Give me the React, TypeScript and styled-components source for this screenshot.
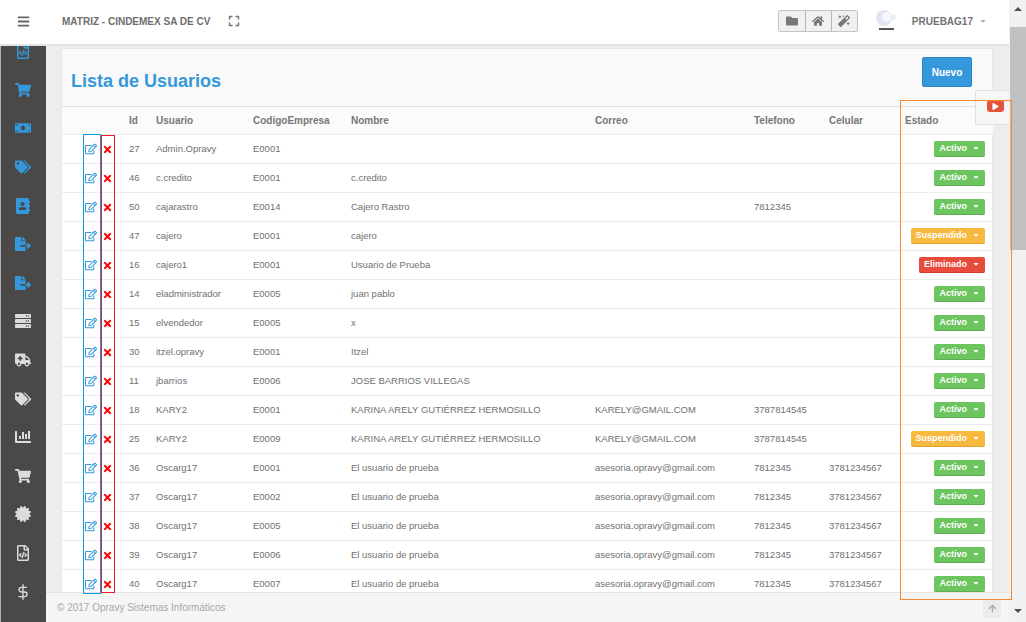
import React from "react";
import styled, { createGlobalStyle } from "styled-components";
import {
  FaBars, FaExpand, FaFolder, FaHome, FaMagic, FaCaretDown, FaRegEdit, FaTimes, FaShoppingCart, FaMoneyBill,
  FaTags, FaAddressBook, FaFileExport, FaServer, FaAmbulance, FaChartBar, FaCertificate, FaRegFileCode,
  FaRegFile, FaArrowUp, FaPlay, FaPortrait,
} from "react-icons/fa";
import { FiDollarSign } from "react-icons/fi";

const Global = createGlobalStyle`
  html, body { margin: 0; padding: 0; overflow: hidden; background: #ededed; }
  body { font-family: "Liberation Sans", Arial, sans-serif; }
  * { box-sizing: border-box; }
`;

const Page = styled.div`
  position: relative; display: flex; width: 1026px; height: 622px; overflow: hidden; background: #ededed;
`;
const Shell = styled.div`
  flex: 1; min-width: 0; display: flex; flex-direction: column;
`;
const TopBar = styled.header`
  position: relative; z-index: 2; flex: 0 0 46px; display: flex; align-items: center; background: #fff;
  border-bottom: 2px solid #e3e3e3; padding: 0 22px 2px 17px; color: #6f6f6f;
`;
const Burger = styled(FaBars)`font-size: 13px; color: #666; width: 13px;`;
const Company = styled.span`
  margin-left: 32px; font-size: 10px; font-weight: 700; color: #6e6e6e;
`;
const Fullscreen = styled(FaExpand)`margin-left: 18px; font-size: 12px; color: #777;`;
const Spacer = styled.div`flex: 1;`;
const Group = styled.div`
  display: flex; height: 22px; border: 1px solid #c4c4c4; border-radius: 2px; background: #f0f0f0;
`;
const GroupButton = styled.div`
  width: 26px; display: flex; align-items: center; justify-content: center; font-size: 12px; color: #777;
  & + & { border-left: 1px solid #b5b5b5; }
`;
const Logo = styled.svg`margin-left: 16px; width: 24px; height: 24px;`;
const UserName = styled.span`margin-left: 14px; font-size: 10px; font-weight: 700; color: #737373;`;
const UserCaret = styled(FaCaretDown)`margin-left: 6px; font-size: 8px; color: #aaa;`;

const Body = styled.div`flex: 1; min-height: 0; display: flex;`;
const Sidebar = styled.nav`
  flex: 0 0 46px; overflow: hidden; background: #4a4947; border-left: 1px solid #aab2bf;
`;
const SideList = styled.div`
  margin-top: -14px; display: flex; flex-direction: column; align-items: center; padding-right: 1px;
`;
const SideItem = styled.div<{ $blue?: boolean }>`
  height: 38.6px; flex: none; width: 100%; display: flex; align-items: center; justify-content: center;
  font-size: 16px; color: ${(p) => (p.$blue ? "#3498db" : "#dcdcdc")};
`;
const Main = styled.main`flex: 1; min-width: 0; display: flex; flex-direction: column;`;
const Scroller = styled.div`flex: 1; min-height: 0; overflow: hidden; padding: 2px 16px 0 15px;`;
const Card = styled.section`background: #fff; border: 1px solid #e6e6e6; border-bottom: 0;`;
const CardHead = styled.div`
  height: 58px; display: flex; align-items: flex-start; justify-content: space-between;
  background: #f9f9f9; border-bottom: 1px solid #e3e3e3; padding: 8px 20px 0 9px;
`;
const Title = styled.h1`
  margin: 13px 0 0; font-size: 18px; line-height: 22px; font-weight: 700; color: #3498db;
`;
const NewButton = styled.div`
  width: 50px; height: 30px; display: flex; align-items: center; justify-content: center;
  background: #3498db; border: 1px solid #2a85c4; border-radius: 2px;
  font-size: 10px; font-weight: 700; color: #fff;
`;
const Table = styled.table`
  width: 931px; border-collapse: collapse; table-layout: fixed; font-size: 9.5px; color: #707070;
`;
const Th = styled.th<{ $w: number }>`
  width: ${(p) => p.$w}px; height: 27px; padding: 0 8px; text-align: left; font-weight: 700; color: #777;
  background: #fbfbfb; border-bottom: 1px solid #ececec; font-size: 10px; white-space: nowrap;
`;
const Td = styled.td`
  height: 29px; padding: 0 8px; border-bottom: 1px solid #ececec; white-space: nowrap; overflow: visible;
`;
const ActionCell = styled.td`
  height: 29px; padding: 0 0 0 23px; border-bottom: 1px solid #ececec; font-size: 11px; line-height: 0;
`;
const EditIcon = styled(FaRegEdit)`color: #3498db; font-size: 12px;`;
const DeleteIcon = styled(FaTimes)`margin-left: 5px; color: #f00; font-size: 11px;`;
const StateCell = styled(Td)`text-align: right;`;
const colors = {
  Activo: ["#6cc55f", "#5cad50"],
  Suspendido: ["#f7b93e", "#dca131"],
  Eliminado: ["#e74c3c", "#cc3f31"],
};
type State = keyof typeof colors;
const StateButton = styled.span<{ $s: State }>`
  display: inline-flex; align-items: center; height: 16px; padding: 0 5px 0 5px; border-radius: 2px;
  background: ${(p) => colors[p.$s][0]}; border: 1px solid ${(p) => colors[p.$s][1]};
  border-width: 0 0 1px 0; color: #fff; font-weight: 700; font-size: 9px;
  svg { margin-left: 5px; font-size: 8px; }
`;
const Footer = styled.footer`
  flex: 0 0 30px; display: flex; align-items: center; justify-content: space-between;
  background: #f5f5f5; border-top: 1px solid #e3e3e3; padding: 0 8px 0 11px; font-size: 10px; color: #a8a8a8;
`;
const UpButton = styled.div`
  width: 18px; height: 18px; margin-top: 2px; display: flex; align-items: center; justify-content: center;
  background: #ebebeb; border-radius: 2px; color: #aaa; font-size: 9px;
`;
const Scrollbar = styled.div`
  flex: 0 0 17px; display: flex; flex-direction: column; align-items: center; background: #f1f1f1;
`;
const Arrow = styled.div<{ $up?: boolean }>`
  flex: 0 0 27px; width: 100%; display: flex; justify-content: center; padding-top: 7px;
  &::after {
    content: ""; width: 0; height: 0; border-left: 4px solid transparent; border-right: 4px solid transparent;
    ${(p) => (p.$up ? "border-bottom: 4px solid #505050;" : "border-top: 4px solid #505050; margin-top: 7px;")}
  }
`;
const Thumb = styled.div`flex: 0 0 223px; width: 16px; margin-left: 1px; background: #c1c1c1;`;
const Track = styled.div`flex: 1;`;
const Outline = styled.div<{ $x: number; $y: number; $w: number; $h: number; $c: string }>`
  position: absolute; z-index: 5; pointer-events: none; left: ${(p) => p.$x}px; top: ${(p) => p.$y}px;
  width: ${(p) => p.$w}px; height: ${(p) => p.$h}px; border: 1px solid ${(p) => p.$c};
`;
const VideoTab = styled.div`
  position: absolute; z-index: 4; left: 975px; top: 90px; width: 34px; height: 35px;
  background: #f7f7f7; border: 1px solid #e0e0e0; border-right: 0; border-radius: 2px 0 0 2px;
`;
const VideoBadge = styled.div`
  position: absolute; left: 11px; top: 9px; width: 17px; height: 12px; background: #e5533d; border-radius: 3px;
  display: flex; align-items: center; justify-content: center; color: #fff; font-size: 7px;
`;

const Columns = [59, 27, 97, 98, 244, 159, 75, 76, 96];
const Heads = ["", "Id", "Usuario", "CodigoEmpresa", "Nombre", "Correo", "Telefono", "Celular", "Estado"];
const Mail = "asesoria.opravy@gmail.com";
const Prueba = "El usuario de prueba";
const rows: [string, string, string, string, string, string, string, State][] = [
  ["27", "Admin.Opravy", "E0001", "", "", "", "", "Activo"],
  ["46", "c.credito", "E0001", "c.credito", "", "", "", "Activo"],
  ["50", "cajarastro", "E0014", "Cajero Rastro", "", "7812345", "", "Activo"],
  ["47", "cajero", "E0001", "cajero", "", "", "", "Suspendido"],
  ["16", "cajero1", "E0001", "Usuario de Prueba", "", "", "", "Eliminado"],
  ["14", "eladministrador", "E0005", "juan pablo", "", "", "", "Activo"],
  ["15", "elvendedor", "E0005", "x", "", "", "", "Activo"],
  ["30", "itzel.opravy", "E0001", "Itzel", "", "", "", "Activo"],
  ["11", "jbarrios", "E0006", "JOSE BARRIOS VILLEGAS", "", "", "", "Activo"],
  ["18", "KARY2", "E0001", "KARINA ARELY GUTIÉRREZ HERMOSILLO", "KARELY@GMAIL.COM", "3787814545", "", "Activo"],
  ["25", "KARY2", "E0009", "KARINA ARELY GUTIÉRREZ HERMOSILLO", "KARELY@GMAIL.COM", "3787814545", "", "Suspendido"],
  ["36", "Oscarg17", "E0001", Prueba, Mail, "7812345", "3781234567", "Activo"],
  ["37", "Oscarg17", "E0002", Prueba, Mail, "7812345", "3781234567", "Activo"],
  ["38", "Oscarg17", "E0005", Prueba, Mail, "7812345", "3781234567", "Activo"],
  ["39", "Oscarg17", "E0006", Prueba, Mail, "7812345", "3781234567", "Activo"],
  ["40", "Oscarg17", "E0007", Prueba, Mail, "7812345", "3781234567", "Activo"],
];
const sideIcons: [React.ReactNode, boolean][] = [
  [<FaRegFileCode />, true], [<FaShoppingCart />, true], [<FaMoneyBill />, true], [<FaTags />, true],
  [<FaAddressBook />, true], [<FaFileExport />, true], [<FaFileExport />, true], [<FaServer />, false],
  [<FaAmbulance />, false], [<FaTags />, false], [<FaChartBar />, false], [<FaShoppingCart />, false],
  [<FaCertificate />, false], [<FaRegFileCode />, false], [<FiDollarSign />, false], [<FaPortrait />, false],
];

export default function App() {
  return (
    <Page>
      <Global />
      <Shell>
        <TopBar>
          <Burger />
          <Company>MATRIZ - CINDEMEX SA DE CV</Company>
          <Fullscreen />
          <Spacer />
          <Group>
            <GroupButton><FaFolder /></GroupButton>
            <GroupButton><FaHome /></GroupButton>
            <GroupButton><FaMagic /></GroupButton>
          </Group>
          <Logo viewBox="0 0 24 24">
            <circle cx="10" cy="9" r="8" fill="#dfe5f2" />
            <circle cx="13" cy="8" r="5" fill="#f7f8fc" />
            <circle cx="19" cy="8" r="3" fill="#eceef4" />
            <rect x="5" y="19" width="15" height="2" fill="#555" />
          </Logo>
          <UserName>PRUEBAG17</UserName>
          <UserCaret />
        </TopBar>
        <Body>
          <Sidebar>
            <SideList>
              {sideIcons.map(([icon, blue], i) => (
                <SideItem key={i} $blue={blue}>{icon}</SideItem>
              ))}
            </SideList>
          </Sidebar>
          <Main>
            <Scroller>
              <Card>
                <CardHead>
                  <Title>Lista de Usuarios</Title>
                  <NewButton>Nuevo</NewButton>
                </CardHead>
                <Table>
                  <thead>
                    <tr>
                      {Heads.map((h, i) => (
                        <Th key={i} $w={Columns[i]}>{h}</Th>
                      ))}
                    </tr>
                  </thead>
                  <tbody>
                    {rows.map((r) => (
                      <tr key={r[0]}>
                        <ActionCell><EditIcon /><DeleteIcon /></ActionCell>
                        <Td>{r[0]}</Td>
                        <Td>{r[1]}</Td>
                        <Td>{r[2]}</Td>
                        <Td>{r[3]}</Td>
                        <Td>{r[4]}</Td>
                        <Td>{r[5]}</Td>
                        <Td>{r[6]}</Td>
                        <StateCell>
                          <StateButton $s={r[7]}>{r[7]}<FaCaretDown /></StateButton>
                        </StateCell>
                      </tr>
                    ))}
                  </tbody>
                </Table>
              </Card>
            </Scroller>
            <Footer>
              <span>© 2017 Opravy Sistemas Informáticos</span>
              <UpButton><FaArrowUp /></UpButton>
            </Footer>
          </Main>
        </Body>
      </Shell>
      <Scrollbar>
        <Arrow $up />
        <Thumb />
        <Track />
        <Arrow />
      </Scrollbar>
      <VideoTab>
        <VideoBadge><FaPlay /></VideoBadge>
      </VideoTab>
      <Outline $x={83} $y={134} $w={18} $h={460} $c="#0f9be0" />
      <Outline $x={101} $y={135} $w={14} $h={458} $c="#ee1c25" />
      <Outline $x={900} $y={100} $w={112} $h={500} $c="#f58a36" />
    </Page>
  );
}
